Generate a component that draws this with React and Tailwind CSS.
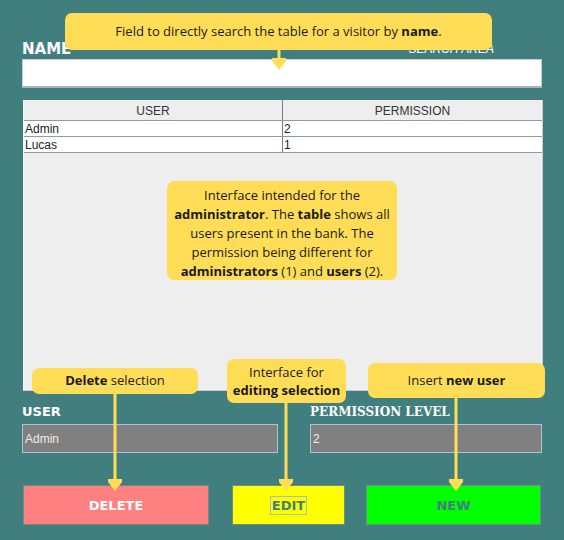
import React from "react";

const Arrow = ({ x, top, bottom }) => (
  <svg
    className="absolute pointer-events-none"
    style={{ left: x - 8, top, width: 16, height: bottom - top }}
    viewBox={`0 0 16 ${bottom - top}`}
  >
    <rect x="6.5" y="0" width="3" height={bottom - top - 10} fill="#ffdd57" />
    <polygon
      points={`1,${bottom - top - 12} 15,${bottom - top - 12} 15,${bottom - top - 9} 8,${bottom - top} 1,${bottom - top - 9}`}
      fill="#ffdd57"
      strokeLinejoin="round"
    />
  </svg>
);

const Tip = ({ className, children }) => (
  <div
    className={
      "absolute flex items-center justify-center rounded-[7px] bg-[#ffdd57] text-center text-[#1a1a1a] font-['Open_Sans',sans-serif] " +
      className
    }
  >
    {children}
  </div>
);

export default function App() {
  const users = [
    { name: "Admin", level: "2" },
    { name: "Lucas", level: "1" },
  ];

  return (
    <div className="relative w-[564px] h-[540px] overflow-hidden bg-[#417f7f] px-[22px] pt-[40px] font-['DejaVu_Sans',sans-serif]">
      {/* search header */}
      <div className="flex h-[19px] items-start justify-between">
        <span className="pt-[1px] text-[15px] font-bold leading-[17px] text-white">NAME</span>
        <span className="mr-[48px] pt-[2px] font-['Liberation_Sans',sans-serif] text-[12px] font-light italic leading-[14px] text-white">
          SEARCH AREA
        </span>
      </div>
      <div className="h-[29px] w-[520px] border border-[#c7ccd2] border-b-2 border-b-[#a9b1ba] bg-white" />

      {/* users table */}
      <div className="ml-[1px] mt-[12px] h-[291px] w-[520px] border-r border-b border-[#c9cdd2] border-l-[#f7f7f7] border-l bg-[#eeeeee] font-['Liberation_Sans',sans-serif] text-[12px]">
        <div className="grid grid-cols-[259px_259px] border-b border-[#8f9bab] text-[#333]">
          <div className="flex h-[20px] items-center justify-center border-r border-[#6e7d8c] pt-[1px]">USER</div>
          <div className="flex h-[20px] items-center justify-center pt-[1px]">PERMISSION</div>
        </div>
        {users.map((u) => (
          <div key={u.name} className="grid grid-cols-[259px_259px] border-b border-[#8f9bab] bg-white text-[#222]">
            <div className="flex h-[15px] items-center border-r border-[#6e7d8c] pl-[1px]">{u.name}</div>
            <div className="flex h-[15px] items-center pl-[1px]">{u.level}</div>
          </div>
        ))}
      </div>

      {/* edit fields */}
      <div className="mt-[12px] grid grid-cols-[256px_232px] gap-x-[32px]">
        <div className="h-[21px] pt-[1px] text-[13px] font-bold leading-[16px] text-white">USER</div>
        <div className="h-[21px] pt-[1px] font-['DejaVu_Serif',serif] text-[12px] font-bold leading-[16px] text-white">
          PERMISSION LEVEL
        </div>
        <div className="flex h-[29px] items-center border border-[#a9c6d6] bg-[#808080] pl-[2px] font-['Liberation_Sans',sans-serif] text-[12px] text-[#ececec]">
          Admin
        </div>
        <div className="flex h-[29px] items-center border border-[#a9c6d6] bg-[#808080] pl-[2px] font-['Liberation_Sans',sans-serif] text-[12px] text-[#ececec]">
          2
        </div>
      </div>

      {/* actions */}
      <div className="mt-[32px] flex h-[40px] text-[13px] font-bold">
        <button className="ml-[1px] h-full w-[186px] border border-[#6f8b8b] bg-[#ff8080] pt-[1px] text-white">DELETE</button>
        <button className="ml-[23px] flex h-full w-[113px] items-center justify-center border border-[#6f8b8b] bg-[#ffff00] pt-[1px] text-[#417f7f]">
          <span className="border border-[#a8bcc8] px-[1px] leading-[17px]">EDIT</span>
        </button>
        <button className="ml-[21px] h-full w-[175px] border border-[#6f8b8b] bg-[#00ff00] pt-[1px] text-[#417f7f]">NEW</button>
      </div>

      {/* annotations */}
      <Arrow x={279} top={48} bottom={70} />
      <Tip className="left-[65px] top-[13px] h-[37px] w-[427px] text-[13px]">
        <span>
          Field to directly search the table for a visitor by <b>name</b>.
        </span>
      </Tip>

      <Tip className="left-[167px] top-[181px] h-[99px] w-[230px] pt-[5px] text-[13px] leading-[19px]">
        <span>
          Interface intended for the
          <br />
          <b>administrator</b>. The <b>table</b> shows all
          <br />
          users present in the bank. The
          <br />
          permission being different for
          <br />
          <b>administrators</b> (1) and <b>users</b> (2).
        </span>
      </Tip>

      <Arrow x={115} top={392} bottom={491} />
      <Arrow x={286} top={400} bottom={491} />
      <Arrow x={456} top={396} bottom={491} />

      <Tip className="left-[32px] top-[368px] h-[26px] w-[166px] text-[13px]">
        <span>
          <b>Delete</b> selection
        </span>
      </Tip>
      <Tip className="left-[227px] top-[359px] h-[44px] w-[119px] text-[13px] leading-[18px]">
        <span>
          Interface for
          <br />
          <b>editing selection</b>
        </span>
      </Tip>
      <Tip className="left-[368px] top-[363px] h-[35px] w-[177px] text-[13px]">
        <span>
          Insert <b>new user</b>
        </span>
      </Tip>
    </div>
  );
}
